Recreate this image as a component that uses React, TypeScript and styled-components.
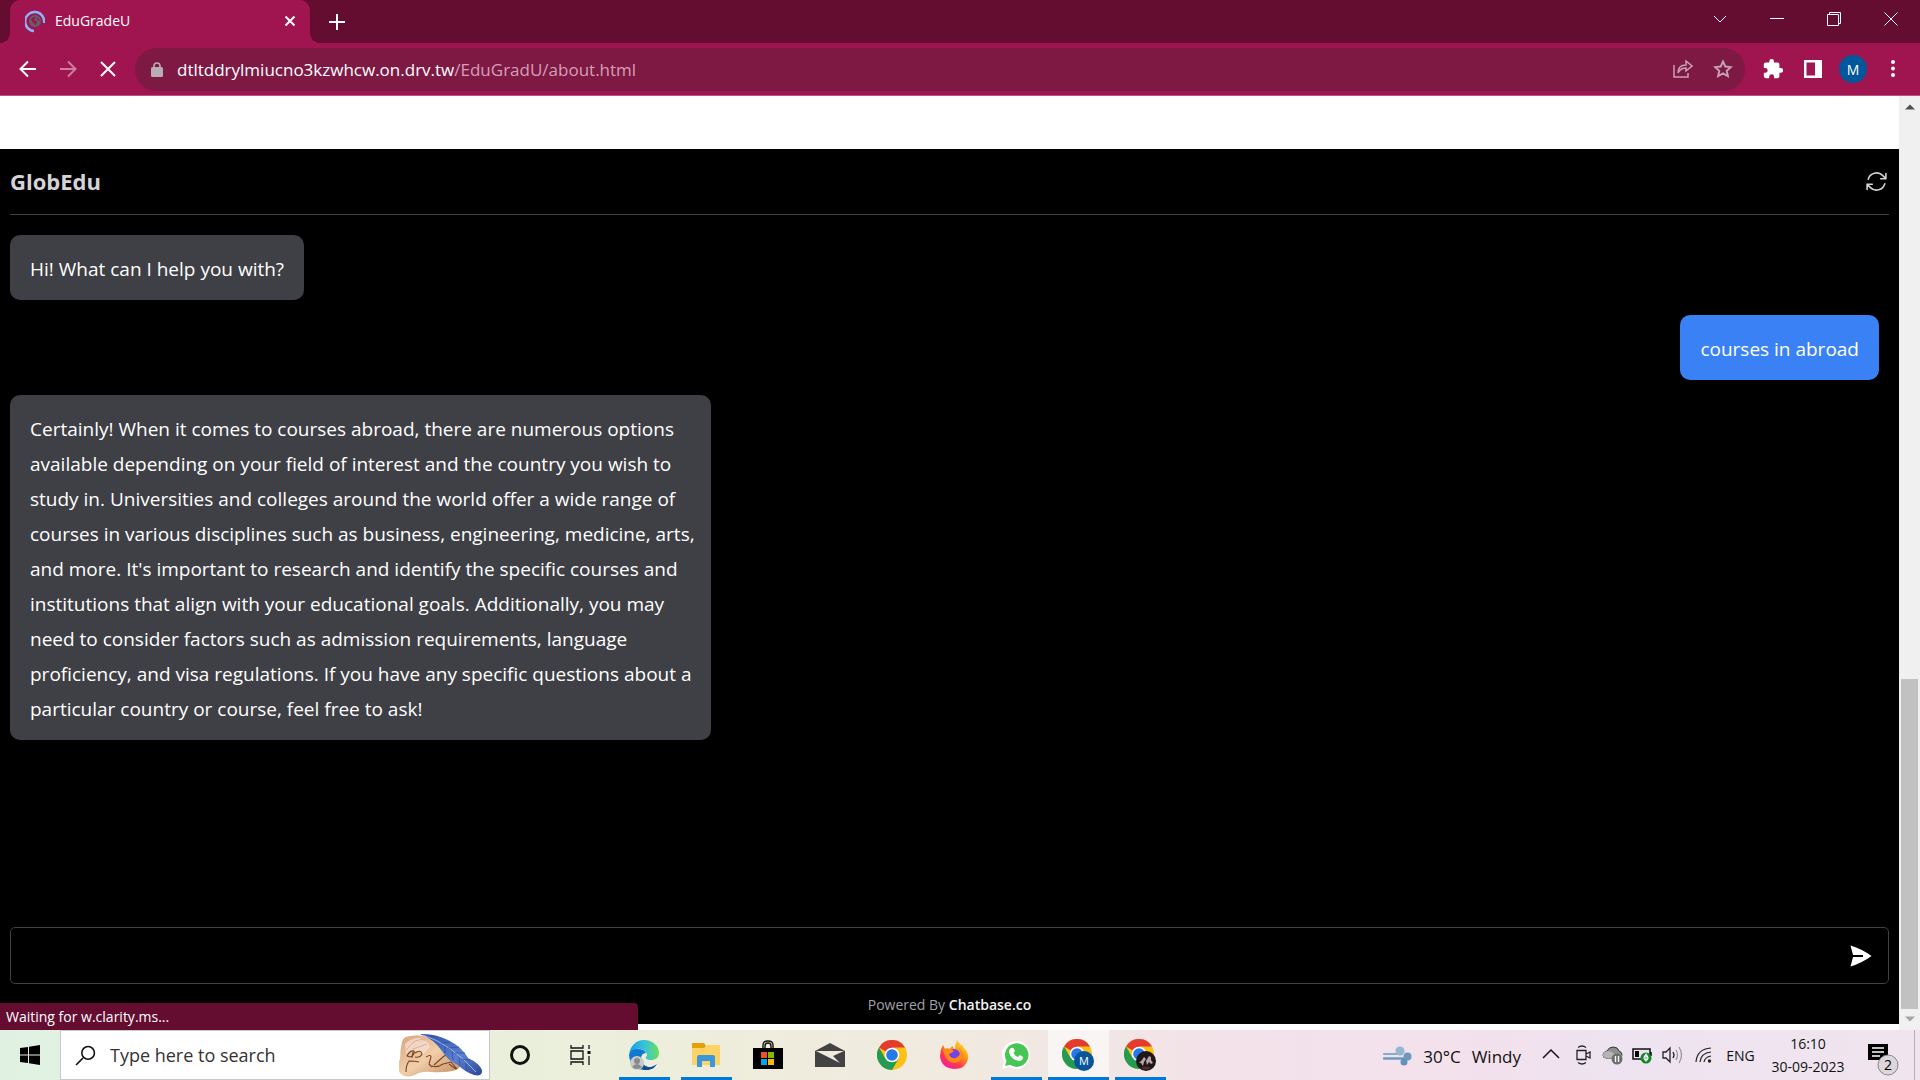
import React from 'react';
import styled, { createGlobalStyle } from 'styled-components';

const Global = createGlobalStyle`
  *{box-sizing:border-box}
  html,body,#root{height:100%}
  body{margin:0;overflow:hidden;background:#fff;font-family:"Open Sans","Noto Sans",sans-serif}
  button{font:inherit;color:inherit;background:none;border:0;padding:0;margin:0}
  svg{display:block;flex:none}
`;

const Screen = styled.div`display:flex;flex-direction:column;height:100vh;`;

const TitleBar = styled.header`display:flex;height:43px;flex:none;background:#640d31;color:#fff;padding-left:10px;`;
const Tab = styled.div`
  position:relative;display:flex;align-items:center;width:300px;padding:0 12px 2px 15px;background:#a0144f;
  border-radius:10px 10px 0 0;font-size:14px;gap:10px;
  &::before,&::after{content:"";position:absolute;bottom:0;width:10px;height:10px}
  &::before{left:-10px;background:radial-gradient(circle at 0 0,transparent 10px,#a0144f 10px)}
  &::after{right:-10px;background:radial-gradient(circle at 100% 0,transparent 10px,#a0144f 10px)}
`;
const TabTitle = styled.span`flex:1;`;
const IconButton = styled.button<{ $w?: number; $dim?: boolean }>`
  display:flex;align-items:center;justify-content:center;flex:none;width:${p => p.$w ?? 40}px;
  opacity:${p => (p.$dim ? 0.45 : 1)};
`;
const NewTab = styled(IconButton)`margin-left:7px;`;
const WindowButtons = styled.div`display:flex;margin-left:auto;height:38px;`;

const Toolbar = styled.nav`
  display:flex;align-items:center;height:53px;flex:none;background:#a0144f;border-bottom:1px solid #bb5580;
  color:#fff;padding:0 7px 0 8px;
`;
const Omnibox = styled.div`
  display:flex;flex:1;align-items:center;height:43px;margin:0 8px 0 7px;padding:0 2px 0 16px;border-radius:22px;background:#7d1943;
`;
const Url = styled.a`flex:1;margin-left:14px;color:#d79fb7;font-size:17px;text-decoration:none;`;
const Host = styled.span`color:#fff;`;
const Avatar = styled.span`
  display:flex;align-items:center;justify-content:center;width:28px;height:28px;border-radius:50%;
  background:#01579b;font-size:14px;
`;

const Viewport = styled.div`position:relative;display:flex;flex:1;min-height:0;`;
const Page = styled.main`display:flex;flex-direction:column;flex:1;padding:53px 0 6px;`;
const Chat = styled.section`display:flex;flex:1;flex-direction:column;background:#000;color:#fff;padding:0 10px;`;
const ChatHeader = styled.div`
  display:flex;align-items:center;justify-content:space-between;height:66px;border-bottom:1px solid #3f3f46;
`;
const Name = styled.h1`margin:0;padding-bottom:2px;font-size:22px;line-height:30px;color:#d4d4d8;font-weight:700;`;
const Messages = styled.div`display:flex;flex:1;flex-direction:column;align-items:flex-start;gap:15px;padding-top:20px;`;
const Bubble = styled.p<{ $mine?: boolean }>`
  margin:${p => (p.$mine ? '0 10px 0 0' : '0')};align-self:${p => (p.$mine ? 'flex-end' : 'flex-start')};
  max-width:701px;padding:17px 20px 13px;border-radius:10px;background:${p => (p.$mine ? '#3b81f6' : '#3f3f46')};
  font-size:19px;line-height:35px;white-space:pre;
`;
const Composer = styled.form`
  display:flex;height:57px;border:1px solid #3f3f46;border-radius:5px;
`;
const ChatInput = styled.input`flex:1;border:0;outline:0;background:none;color:#fff;font:inherit;font-size:19px;padding:0 15px;`;
const Powered = styled.footer`height:40px;padding-top:2px;font-size:14px;line-height:38px;text-align:center;color:#a1a1aa;`;
const Brand = styled.a`color:#f4f4f5;font-weight:600;text-decoration:none;`;

const ScrollBar = styled.div`
  display:flex;flex-direction:column;align-items:center;width:21px;background:#f0f0f0;padding:8px 0;
`;
const ThumbTrack = styled.div`display:flex;flex:1;flex-direction:column;justify-content:flex-end;width:17px;padding:8px 0 7px;`;
const Thumb = styled.div`height:37%;background:#c1c1c1;`;
const Status = styled.div`
  position:absolute;left:0;bottom:0;width:638px;height:27px;padding-left:6px;border-radius:0 4px 0 0;
  background:#640d31;color:#fff;font-size:14px;line-height:27px;
`;

const Taskbar = styled.footer`
  display:flex;height:50px;flex:none;color:#111;
  background:linear-gradient(90deg,#e0f1e2 0%,#eaefdb 28%,#eeeddc 38%,#f1e9e1 52%,#f3e2ea 64%,#f3e1ec 76%,#eee3f0 84%,#f0e5ee 100%);
`;
const SearchBox = styled.label`
  display:flex;align-items:center;width:430px;border:1px solid #c8c8c8;background:#fff;padding:0 6px 0 14px;
`;
const SearchInput = styled.input`
  flex:1;min-width:0;border:0;outline:0;background:none;font:inherit;font-size:18px;padding:0;margin-left:14px;
  &::placeholder{color:#333;opacity:1}
`;
const AppButton = styled(IconButton)<{ $open?: boolean; $active?: boolean }>`
  position:relative;
  &::before{content:"";position:absolute;inset:0 0 0 1px;background:${p => (p.$active ? '#fff9' : 'none')};z-index:0}
  &::after{content:"";position:absolute;bottom:0;height:3px;left:${p => (p.$active ? 1 : 6)}px;right:${p => (p.$active ? 0 : 5)}px;
    background:${p => (p.$open ? '#0078d7' : 'none')}}
  svg{position:relative;z-index:1}
`;
const AppGroup = styled.div`display:flex;margin-left:3px;`;
const Tray = styled.div`display:flex;align-items:center;margin-left:auto;`;
const Weather = styled.button`display:flex;align-items:center;gap:11px;font-size:17px;padding-top:2px;margin-right:12px;`;
const Lang = styled.button`width:43px;font-size:14px;`;
const Clock = styled.button`display:flex;flex-direction:column;align-items:center;width:92px;font-size:14px;line-height:23px;`;
const Desktop = styled.button`align-self:stretch;width:6px;border-left:1px solid #b8afb8;`;

const line = (d: string, w = 20, sw = 2, vb = '0 0 20 20') => (
  <svg width={w} height={w} viewBox={vb} fill="none" stroke="currentColor" strokeWidth={sw}><path d={d} /></svg>
);

const Favicon = () => (
  <svg width="20" height="24" viewBox="0 0 20 24">
    <circle cx="10" cy="12" r="6" fill="#5f6368" />
    <path d="M6 10q3-3 5-2l-2 3 3 1-1 4-3-2zM12 8l3 3-2 1z" fill="#a0144f" />
    <path d="M9 22A9.500 9.500 0 1 1 19 14" fill="none" stroke="#8ab4f8" strokeWidth="2.500" />
  </svg>
);
const Lock = () => (
  <svg width="12" height="15" viewBox="0 0 12 15"><rect y="5" width="12" height="10" rx="1.500" fill="#b7aeb3" /><path d="M3 6V4a3 3 0 0 1 6 0v2" fill="none" stroke="#b7aeb3" strokeWidth="1.600" /></svg>
);
const Share = () => (
  <svg width="20" height="20" viewBox="0 0 20 20" fill="none" stroke="#c7a3b2" strokeWidth="1.500"><path d="M1 6v12h14v-4M5 14c0-5 3-8 8-8V2l6 5-6 5V9c-4 0-6 1-8 5z" /></svg>
);
const Star = () => (
  <svg width="20" height="20" viewBox="0 0 20 20" fill="none" stroke="#c7a3b2" strokeWidth="1.900"><path d="M10 2.500l2.300 5 5.500.600-4.100 3.700 1.200 5.400L10 14.400l-4.900 2.800 1.200-5.400-4.100-3.700 5.500-.600z" /></svg>
);
const Puzzle = () => (
  <svg width="22" height="22" viewBox="0 0 24 24" fill="#fff"><path d="M20.500 11H19V7a2 2 0 0 0-2-2h-4V3.500a2.500 2.500 0 0 0-5 0V5H4a2 2 0 0 0-2 2v3.800h1.500a2.700 2.700 0 0 1 0 5.400H2V20a2 2 0 0 0 2 2h3.800v-1.500a2.700 2.700 0 0 1 5.400 0V22H17a2 2 0 0 0 2-2v-4h1.500a2.500 2.500 0 0 0 0-5z" /></svg>
);
const Panel = () => (
  <svg width="18" height="18" viewBox="0 0 18 18"><path fill="#fff" fillRule="evenodd" d="M0 0h18v18H0zM2.500 2.500v13H11v-13z" /></svg>
);
const Dots = () => (
  <svg width="6" height="18" viewBox="0 0 6 18" fill="#fff"><circle cx="3" cy="2" r="2" /><circle cx="3" cy="8.500" r="2" /><circle cx="3" cy="15" r="2" /></svg>
);
const Restore = () => (
  <svg width="14" height="14" viewBox="0 0 14 14" fill="none" stroke="#fff" strokeWidth="1"><path d="M.5 2.500h11v11H.5zM2.500 2.500v-2h11v11h-2" /></svg>
);
const Refresh = () => (
  <svg width="25" height="25" viewBox="0 0 24 24" fill="none" stroke="#d4d4d8" strokeWidth="1.500" strokeLinecap="round" strokeLinejoin="round"><path d="M16.023 9.348h4.992v-.001M2.985 19.644v-4.992m0 0h4.992m-4.993 0 3.181 3.183a8.250 8.250 0 0 0 13.803-3.700M4.031 9.865a8.250 8.250 0 0 1 13.803-3.700l3.181 3.182m0-4.991v4.990" /></svg>
);
const Send = () => (
  <svg width="22" height="22" viewBox="0 0 22 22"><path d="M.5.500Q12 4 21.500 11 12 18 .5 21.500L3 12h10v-2H3z" fill="#fff" /></svg>
);
const Arrow = ({ up }: { up?: boolean }) => (
  <svg width="10" height="6" viewBox="0 0 10 6"><path d={up ? 'M0 5.500 5 .500l5 5z' : 'M0 .500h10l-5 5z'} fill={up ? '#505050' : '#a3a3a3'} /></svg>
);
const Windows = () => (
  <svg width="20" height="20" viewBox="0 0 20 20"><path d="M0 3l8-1v7.500H0zM9 1.800 20 0v9.500H9zM0 10.500h8V18l-8-1zM9 10.500h11V20L9 18.200z" /></svg>
);
const Feather = () => (
  <svg width="84" height="44" viewBox="0 0 84 44">
    <defs>
      <linearGradient id="skin" x2="1" y2="1"><stop stopColor="#d9a37c" /><stop offset=".5" stopColor="#f0cfa8" /><stop offset="1" stopColor="#c2875c" /></linearGradient>
      <linearGradient id="plume" x2="1" y2="1"><stop stopColor="#2b4fa8" /><stop offset=".6" stopColor="#5b80d0" /><stop offset="1" stopColor="#2a4796" /></linearGradient>
    </defs>
    <path d="M3 9Q4 3 12 3q8-2 16 1 10 0 16 8l16 15q4 7-3 10-10 3-25 2-10-1-16 3-10 4-15-2-4-6 0-14Q1 17 3 9z" fill="url(#skin)" />
    <path d="M6 11q7-7 15-6 9 3 10 9l-7 7q-8-6-17 0z" fill="#f6e2da" opacity=".7" />
    <path d="M7 17Q17 4 26 7M14 16l14-5" fill="none" stroke="#d9a08a" strokeWidth=".8" />
    <path d="M7 39q0-7 3-11 6 0 10 1M8 23q3-6 7-5 1 4-4 6zM16 20q6-4 7 1-2 4-7 3M14 19l-1 6M27 24q5-3 5 0l-2 7 3 3M35 32l9-8q6-5 9-4M33 33q5 2 11-2l8-2 6 7M50 31l7 5" fill="none" stroke="#7a4424" strokeWidth="1.100" />
    <path d="M21 1q14-1 28 6 14 7 20 18 11 5 14 12 1 7-8 5-9-3-16-10-10-4-16-14Q35 6 21 1z" fill="url(#plume)" />
    <path d="M24 2q28 9 53 37" fill="none" stroke="#a9c0ee" strokeWidth=".9" />
    <path d="M42 10l9-1M49 15l11-1M56 20l10 0M62 26l9 1M46 13l0 7M53 18l1 9M60 24l1 9M67 30l1 8" fill="none" stroke="#2d4da0" strokeWidth=".7" />
  </svg>
);
const TaskView = () => (
  <svg width="21" height="20" viewBox="0 0 21 20" fill="none" stroke="#111" strokeWidth="1.300"><path d="M1 0v3h12V0M1 20v-3h12v3M1 6h12v8H1zM19 0v4M19 11v9" /><path d="M17.500 6h3v3h-3z" fill="#111" stroke="none" /></svg>
);
const Edge = () => (
  <svg width="30" height="30" viewBox="0 0 30 30">
    <defs>
      <linearGradient id="sea"><stop stopColor="#1c9be0" /><stop offset=".5" stopColor="#35c1e0" /><stop offset="1" stopColor="#6adf5a" /></linearGradient>
    </defs>
    <path d="M0 15C1 6 7 0 15 0c9 0 15 6 15 13 0 5-4 7-8 7-4 0-6-1-5-3 1-1 1-2 1-2 0-3-5-7-10-6Q3 9 0 15z" fill="url(#sea)" />
    <path d="M0 15q2-7 9-6 6 0 8 4-5 0-5 6 1 6 7 8 6 1 8-3-3 6-12 6Q1 29 0 15z" fill="#0f78d0" />
    <path d="M12 17q-1 9 7 10 6 1 9-4-4 7-13 7-8-5-3-13z" fill="#124b94" />
    <path d="M19 20q3 3 9 1 1 1-1 3-5 3-10 0-4-3-4-7z" fill="#ecefdf" />
    <path d="M19 27q5 1 9-3-4 7-13 6z" fill="#124b94" />
    <circle cx="8" cy="23" r="7" fill="#c9c9c9" /><circle cx="8" cy="21" r="3" fill="#8a8a8a" /><path d="M3 27q5-6 10 0-5 4-10 0" fill="#8a8a8a" />
  </svg>
);
const Folder = () => (
  <svg width="28" height="24" viewBox="0 0 28 24"><path d="M0 0h12l2 3-1 2H0z" fill="#e3a008" /><path d="M0 5h12l3-3h13v20H0z" fill="#ffd264" /><path d="M5 24V14q0-2 2-2h14q2 0 2 2v10h-5v-6h-8v6z" fill="#3a96dd" /></svg>
);
const Store = () => (
  <svg width="30" height="30" viewBox="0 0 30 30"><path d="M10 9V5q0-4 5-4t5 4v4M12 9V6q0-3 3-3t3 3v3" fill="none" stroke="#111" strokeWidth="1.400" /><path d="M0 8h30v21H0z" /><path d="M8 12h6v6H8z" fill="#f25022" /><path d="M15 12h6v6h-6z" fill="#7fba00" /><path d="M8 19h6v6H8z" fill="#00a4ef" /><path d="M15 19h6v6h-6z" fill="#ffb900" /></svg>
);
const Mail = () => (
  <svg width="30" height="24" viewBox="0 0 30 24"><path d="M0 8 15 0l15 8v16H0z" fill="#424242" /><path d="M1 8h28l-11 5 7 7-12-6z" fill="#f0eadd" /></svg>
);
const ChromeShape = () => (
  <g>
    <circle cx="15" cy="15" r="15" fill="#fbc116" />
    <path d="M15 15 2 7.500A15 15 0 0 1 28 7.500H15z" fill="#e33b2e" />
    <path d="M2 7.500A15 15 0 0 0 15 30l6.500-11.200L8.500 18.800z" fill="#239b51" />
    <circle cx="15" cy="15" r="7.300" fill="#fff" /><circle cx="15" cy="15" r="5.800" fill="#2778ea" />
  </g>
);
const Chrome = ({ badge }: { badge?: 'M' | 'photo' }) => (
  <svg width={badge ? 32 : 30} height={badge ? 32 : 30} viewBox={badge ? '0 0 32 32' : '0 0 30 30'}>
    <ChromeShape />
    {badge && <circle cx="22" cy="22" r="10" fill={badge === 'M' ? '#07559a' : '#1d1719'} />}
    {badge === 'M' && <text x="22" y="26" fontSize="11" textAnchor="middle" fill="#fff" fontFamily="Open Sans">M</text>}
    {badge === 'photo' && <><path d="M15 24l3-3 2-3 2 2-2 3-1 4-2-3zM22 22l3-5 2 1v3l2 3-2 1-2-2-2 3z" fill="#b9a5a6" /><path d="M17 29q5-3 10 0-5 3-10 0z" fill="#5a2c25" /></>}
  </svg>
);
const Firefox = () => (
  <svg width="30" height="30" viewBox="0 0 30 30">
    <defs><linearGradient id="fire" x1="1" y1="0" x2=".3" y2="1"><stop stopColor="#fff44f" /><stop offset=".45" stopColor="#ff980e" /><stop offset=".75" stopColor="#ff3750" /><stop offset="1" stopColor="#f0209c" /></linearGradient></defs>
    <path d="M18 0q2 4 6 6l1 2q5 5 4 11-2 10-14 10Q2 28 1 16q0-6 3-11l2 4 5 0q1-3 3-3 0 2 2 4 0-6 2-10z" fill="url(#fire)" />
    <circle cx="15" cy="15" r="6" fill="#7543e5" /><path d="M4 9q7-2 11 2-2 2-5 3 1 5 7 4 7-4 2-10 6 3 5 8-3 7-9 7Q6 22 4 9z" fill="#ff8a16" />
  </svg>
);
const WhatsApp = () => (
  <svg width="30" height="30" viewBox="0 0 30 30"><path d="M1 29l2-7A14 14 0 1 1 8 27z" fill="#fff" /><path d="M4 26l1.500-5A11.800 11.800 0 1 1 9 24.800z" fill="#45c655" /><path d="M10 8q2-1 3 1l1 2-1.500 2q1.500 3 4.500 4l2-2 3 2q0 4-4 4-9-2-10-9 0-3 2-4z" fill="#fff" /></svg>
);
const Wind = () => (
  <svg width="29" height="22" viewBox="0 0 29 22" fill="none" strokeLinecap="round">
    <path d="M1 9h16" stroke="#86abc9" strokeWidth="2" /><circle cx="17" cy="6" r="4.500" fill="#94b7d2" />
    <path d="M1 13.500h22" stroke="#6d9ac0" strokeWidth="2.500" /><circle cx="24.500" cy="11.500" r="4" fill="#6c98be" /><circle cx="21" cy="17" r="3.500" fill="#6391ba" />
  </svg>
);
const Meet = () => (
  <svg width="15" height="20" viewBox="0 0 15 20" fill="none" stroke="#222" strokeWidth="1.300"><path d="M1 5.500h9v9H1zM10 9l4-2v6l-4-2M2 2.500q4-3 8 0M2 17.500q4 3 8 0" /></svg>
);
const Cloud = () => (
  <svg width="21" height="20" viewBox="0 0 21 20"><path d="M4 13Q1 13 1 10q0-3 4-4 2-4 6-4 5 0 6 4 3 1 3 4 0 3-3 3z" fill="#8f8f8f" stroke="#333" /><path d="M5 6q5 0 7 3l8 1q0 3-3 3H4q-3 0-3-3 0-3 4-4z" fill="#b5b3b5" /><circle cx="15" cy="14" r="5.500" fill="#6e6e6e" /><path d="M13.500 11v6M16.500 11v6" stroke="#fff" strokeWidth="1.300" /></svg>
);
const Battery = () => (
  <svg width="21" height="18" viewBox="0 0 21 18"><path d="M1 3h17v10H1zM19 6v4" fill="none" stroke="#111" strokeWidth="1.500" /><path d="M3 5h4v6H3z" /><circle cx="14" cy="12" r="5.500" fill="#10892b" /><path d="M14 8.500q4 4 0 6-4-2 0-6v7" fill="none" stroke="#fff" strokeWidth="1.200" /></svg>
);
const Volume = () => (
  <svg width="21" height="18" viewBox="0 0 21 18" fill="none" stroke="#222" strokeWidth="1.300"><path d="M1 6h3l4-4v14l-4-4H1zM11 6q2 3 0 6" /><path d="M14 4q3 5 0 10M17 1q5 8 0 16" stroke="#999" /></svg>
);
const Wifi = () => (
  <svg width="17" height="18" viewBox="0 0 17 18" fill="none" stroke="#222" strokeWidth="1.200"><path d="M1 16Q2 3 16 2M5 16q1-9 11-10M9 16q1-5 7-6" /><circle cx="14.500" cy="15" r="1.700" fill="#222" stroke="none" /></svg>
);
const Notice = () => (
  <svg width="32" height="42" viewBox="0 -8 32 42"><path d="M0 2h20v16h-4v5l-5-5H0z" /><path d="M4 6h12M4 10h12M4 14h8" stroke="#fff" strokeWidth="1.300" /><circle cx="20" cy="23" r="10" fill="#dcd6dc" stroke="#888" /><text x="20" y="28" fontSize="14" textAnchor="middle" fontFamily="Open Sans">2</text></svg>
);

const answer = `Certainly! When it comes to courses abroad, there are numerous options
available depending on your field of interest and the country you wish to
study in. Universities and colleges around the world offer a wide range of
courses in various disciplines such as business, engineering, medicine, arts,
and more. It's important to research and identify the specific courses and
institutions that align with your educational goals. Additionally, you may
need to consider factors such as admission requirements, language
proficiency, and visa regulations. If you have any specific questions about a
particular country or course, feel free to ask!`;

const apps = [
  { name: 'Edge', icon: <Edge />, open: true },
  { name: 'File Explorer', icon: <Folder />, open: true },
  { name: 'Store', icon: <Store /> },
  { name: 'Mail', icon: <Mail /> },
  { name: 'Chrome', icon: <Chrome /> },
  { name: 'Firefox', icon: <Firefox /> },
  { name: 'WhatsApp', icon: <WhatsApp />, open: true },
  { name: 'Chrome profile M', icon: <Chrome badge="M" />, open: true, active: true },
  { name: 'Chrome second profile', icon: <Chrome badge="photo" />, open: true },
];

export default function App() {
  return (
    <Screen>
      <Global />
      <TitleBar>
        <Tab><Favicon /><TabTitle>EduGradeU</TabTitle><IconButton $w={16} aria-label="Close tab">{line('M3.500 3.500l9 9M12.500 3.500l-9 9', 16, 2, '0 0 16 16')}</IconButton></Tab>
        <NewTab aria-label="New tab">{line('M8 0v16M0 8h16', 16, 2, '0 0 16 16')}</NewTab>
        <WindowButtons>
          <IconButton $w={57} aria-label="Search tabs">{line('M1 4l6 6 6-6', 14, 1, '0 0 14 14')}</IconButton>
          <IconButton $w={57} aria-label="Minimize">{line('M0 6.500h14', 14, 1, '0 0 14 14')}</IconButton>
          <IconButton $w={57} aria-label="Restore"><Restore /></IconButton>
          <IconButton $w={58} aria-label="Close">{line('M.5.500l13 13M13.500.500l-13 13', 14, 1, '0 0 14 14')}</IconButton>
        </WindowButtons>
      </TitleBar>
      <Toolbar>
        <IconButton aria-label="Back">{line('M18 10H3M10 2.500 2.500 10l7.500 7.500', 20)}</IconButton>
        <IconButton $dim aria-label="Forward">{line('M2 10h15M10 2.500l7.500 7.500-7.500 7.500', 20)}</IconButton>
        <IconButton aria-label="Stop">{line('M3 3l14 14M17 3 3 17', 20)}</IconButton>
        <Omnibox>
          <Lock /><Url href="#"><Host>dtltddrylmiucno3kzwhcw.on.drv.tw</Host>/EduGradU/about.html</Url>
          <IconButton aria-label="Share"><Share /></IconButton>
          <IconButton aria-label="Bookmark"><Star /></IconButton>
        </Omnibox>
        <IconButton aria-label="Extensions"><Puzzle /></IconButton>
        <IconButton aria-label="Side panel"><Panel /></IconButton>
        <IconButton aria-label="Profile"><Avatar>M</Avatar></IconButton>
        <IconButton aria-label="Menu"><Dots /></IconButton>
      </Toolbar>
      <Viewport>
        <Page>
          <Chat>
            <ChatHeader><Name>GlobEdu</Name><IconButton $w={25} aria-label="Reset chat"><Refresh /></IconButton></ChatHeader>
            <Messages>
              <Bubble>Hi! What can I help you with?</Bubble>
              <Bubble $mine>courses in abroad</Bubble>
              <Bubble>{answer}</Bubble>
            </Messages>
            <Composer><ChatInput aria-label="Message" /><IconButton $w={54} type="button" aria-label="Send"><Send /></IconButton></Composer>
            <Powered>Powered By <Brand href="#">Chatbase.co</Brand></Powered>
          </Chat>
        </Page>
        <ScrollBar><Arrow up /><ThumbTrack><Thumb /></ThumbTrack><Arrow /></ScrollBar>
        <Status>Waiting for w.clarity.ms...</Status>
      </Viewport>
      <Taskbar>
        <IconButton $w={60} aria-label="Start"><Windows /></IconButton>
        <SearchBox>
          {line('M7.500 12.500 1 19M18.500 7.500a6 6 0 1 1-12 0 6 6 0 1 1 12 0', 21, 1.5)}
          <SearchInput placeholder="Type here to search" aria-label="Search" /><Feather />
        </SearchBox>
        <IconButton $w={60} aria-label="Cortana"><svg width="20" height="20" viewBox="0 0 20 20"><circle cx="10" cy="10" r="8.500" fill="none" stroke="#111" strokeWidth="3" /></svg></IconButton>
        <IconButton $w={60} aria-label="Task view"><TaskView /></IconButton>
        <AppGroup>
          {apps.map(a => <AppButton key={a.name} $w={62} $open={a.open} $active={a.active} aria-label={a.name}>{a.icon}</AppButton>)}
        </AppGroup>
        <Tray>
          <Weather><Wind /><span>30°C</span><span>Windy</span></Weather>
          <IconButton $w={36} aria-label="Hidden icons">{line('M1 12l8-8 8 8', 18, 1.5, '0 0 18 18')}</IconButton>
          <IconButton $w={28} aria-label="Meet now"><Meet /></IconButton>
          <IconButton $w={30} aria-label="OneDrive"><Cloud /></IconButton>
          <IconButton $w={30} aria-label="Battery"><Battery /></IconButton>
          <IconButton $w={30} aria-label="Volume"><Volume /></IconButton>
          <IconButton $w={32} aria-label="Network"><Wifi /></IconButton>
          <Lang>ENG</Lang>
          <Clock><span>16:10</span><span>30-09-2023</span></Clock>
          <IconButton $w={60} aria-label="Notifications"><Notice /></IconButton>
          <Desktop aria-label="Show desktop" />
        </Tray>
      </Taskbar>
    </Screen>
  );
}
